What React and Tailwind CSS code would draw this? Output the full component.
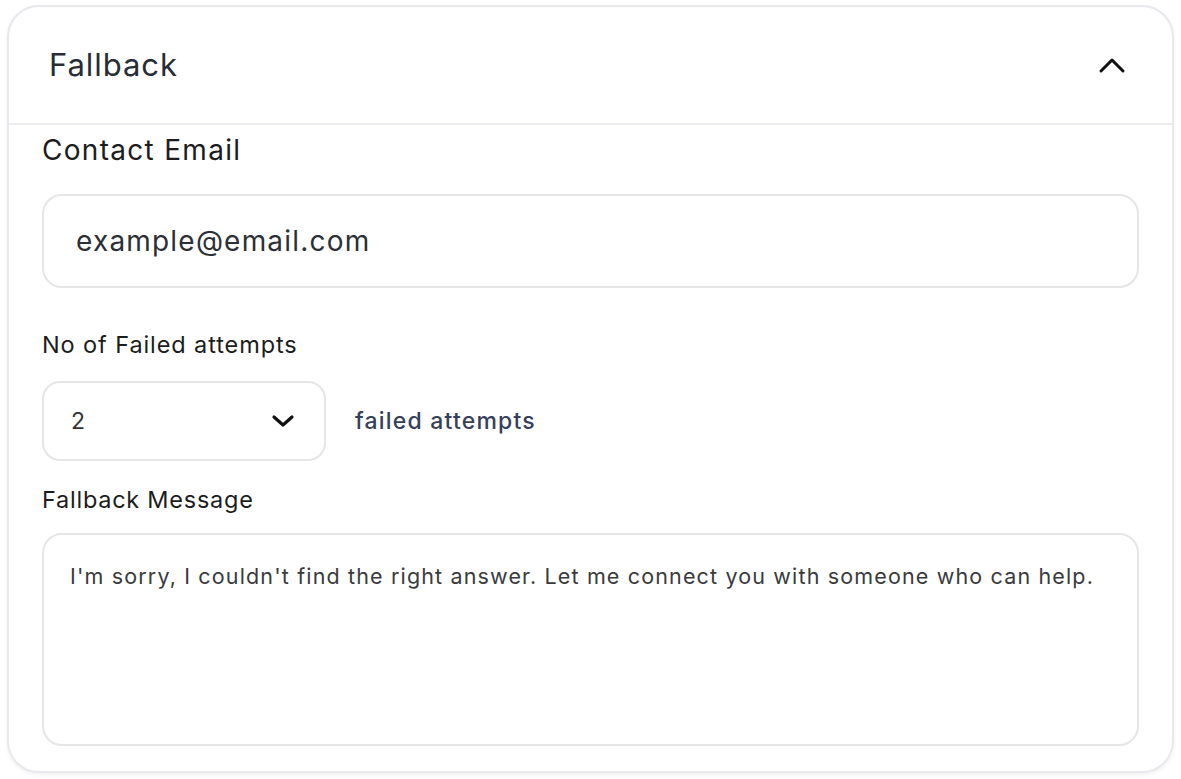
export default function App() {
  const font = { fontFamily: "Inter, 'Noto Sans', sans-serif" };
  return (
    <div className="w-[1181px] h-[779px] bg-white p-[5px] pl-[7px] pr-[7px] box-border" style={font}>
      <div className="h-[768px] rounded-[32px] border-2 border-[#e8e8ee] bg-white shadow-[0_2px_4px_rgba(0,0,0,0.06)] flex flex-col overflow-hidden">
        <div className="h-[118px] flex items-center justify-between pl-[40px] pr-[46px] border-b-2 border-[#ececf1] shrink-0">
          <span className="text-[31px] text-[#272d35] tracking-[0.95px]">Fallback</span>
          <svg width="28" height="18" viewBox="0 0 28 18" fill="none">
            <path d="M3 15L14 4L25 15" stroke="#111" strokeWidth="3" strokeLinecap="round" strokeLinejoin="round" />
          </svg>
        </div>
        <div className="flex flex-col px-[33px] pt-[5px]">
          <label className="text-[28px] text-[#1c1c1e] leading-[40px] tracking-[1.3px]">Contact Email</label>
          <div className="mt-[24px] h-[94px] rounded-[20px] border-2 border-[#e6e6e6] flex items-center pl-[32px]">
            <span className="text-[28px] text-[#2c2f36] tracking-[1.2px]">example@email.com</span>
          </div>
          <label className="mt-[40px] text-[23.5px] text-[#1c1c1e] leading-[34px] tracking-[0.9px]">No of Failed attempts</label>
          <div className="mt-[19px] flex items-center">
            <div className="w-[284px] h-[80px] rounded-[18px] border-2 border-[#e6e6e6] flex items-center justify-between pl-[27px] pr-[29px]">
              <span className="text-[23px] text-[#333]">2</span>
              <svg width="24" height="16" viewBox="0 0 24 16" fill="none">
                <path d="M3 4L12 12L21 4" stroke="#111" strokeWidth="3.2" strokeLinecap="round" strokeLinejoin="round" />
              </svg>
            </div>
            <span className="ml-[29px] text-[23px] font-medium text-[#36405a] tracking-[1.2px]">failed attempts</span>
          </div>
          <label className="mt-[22px] text-[23.5px] text-[#1c1c1e] leading-[34px] tracking-[0.75px]">Fallback Message</label>
          <div className="mt-[16px] h-[213px] rounded-[20px] border-2 border-[#e6e6e6] pl-[26px] pt-[25px]">
            <p className="text-[21.5px] text-[#3a3a3e] tracking-[1.15px] leading-[32px]">I'm sorry, I couldn't find the right answer. Let me connect you with someone who can help.</p>
          </div>
        </div>
      </div>
    </div>
  );
}
